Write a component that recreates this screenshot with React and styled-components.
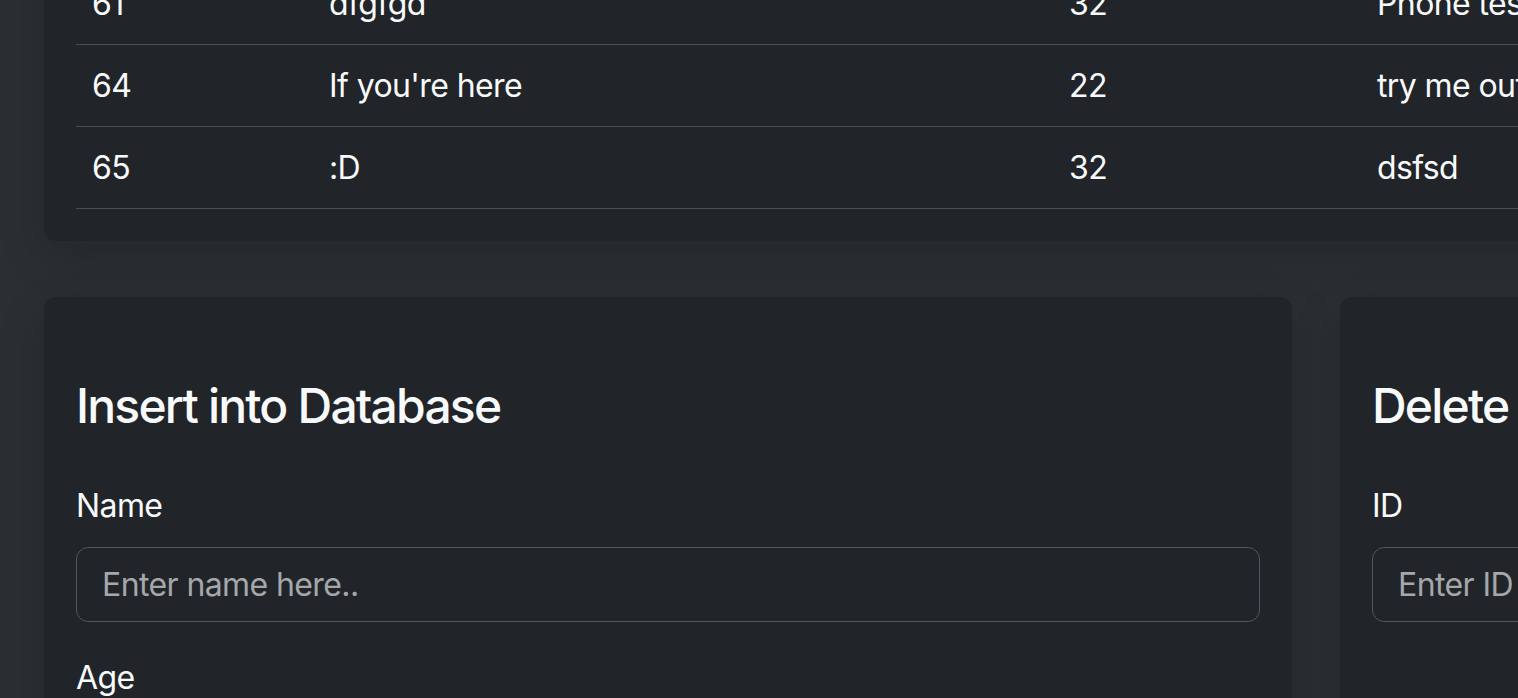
import React from 'react'
import styled, { createGlobalStyle } from 'styled-components'

const GlobalStyle = createGlobalStyle`
  html, body {
    margin: 0;
    padding: 0;
    background: #2b2f34;
    overflow: hidden;
  }
  body {
    font-family: Inter, 'Noto Sans', 'Liberation Sans', sans-serif;
    color: #f8f9fa;
    font-size: 32px;
    line-height: 48px;
    letter-spacing: -0.6px;
  }
  * {
    box-sizing: border-box;
  }
`

const rows = [
  { id: 61, name: 'dfgfgd', age: 32, text: 'Phone test' },
  { id: 64, name: "If you're here", age: 22, text: 'try me out' },
  { id: 65, name: ':D', age: 32, text: 'dsfsd' },
]

const Page = styled.div`
  width: 2544px;
  margin-left: 44px;
  display: flex;
  flex-direction: column;
  gap: 56px;
`

const Card = styled.section`
  background: #212529;
  border-radius: 12px;
  padding: ${(p) => (p.$form ? '80px 32px 32px' : '32px')};
  box-shadow: 0 16px 48px rgba(0, 0, 0, 0.16);
`

const TableCard = styled(Card)`
  margin-top: -69px;
`

const Table = styled.table`
  width: 2480px;
  table-layout: fixed;
  border-collapse: collapse;
  td {
    padding: 17px 16px 16px;
    line-height: 48px;
    border-bottom: 1px solid #494e54;
    white-space: nowrap;
    overflow: hidden;
  }
`

const Columns = styled.div`
  display: grid;
  grid-template-columns: 1248px 1248px;
  gap: 48px;
`

const Heading = styled.h4`
  margin: 0 0 47px;
  font-size: 48px;
  font-weight: 500;
  line-height: 1.2;
  letter-spacing: -1.8px;
  color: #f8f9fa;
`

const Field = styled.div`
  margin-bottom: 32px;
`

const Label = styled.label`
  display: block;
  margin-bottom: 17px;
  font-size: 32px;
  line-height: 48px;
`

const Input = styled.input`
  display: block;
  width: 100%;
  height: 75px;
  padding: 0 25px;
  font-family: inherit;
  font-size: 32px;
  letter-spacing: -0.6px;
  color: #f8f9fa;
  background: #212529;
  border: 1.5px solid #52575d;
  border-radius: 12px;
  outline: none;
  &::placeholder {
    color: #a5a7aa;
  }
`

function FormCard({ title, fields }) {
  return (
    <Card $form>
      <Heading>{title}</Heading>
      {fields.map((f) => (
        <Field key={f.label}>
          <Label>{f.label}</Label>
          <Input type='text' placeholder={f.placeholder} />
        </Field>
      ))}
    </Card>
  )
}

export default function App() {
  return (
    <>
      <GlobalStyle />
      <Page>
        <TableCard>
          <Table>
            <colgroup>
              <col style={{ width: 237 }} />
              <col style={{ width: 740 }} />
              <col style={{ width: 308 }} />
              <col />
            </colgroup>
            <tbody>
              {rows.map((r) => (
                <tr key={r.id}>
                  <td>{r.id}</td>
                  <td>{r.name}</td>
                  <td>{r.age}</td>
                  <td>{r.text}</td>
                </tr>
              ))}
            </tbody>
          </Table>
        </TableCard>
        <Columns>
          <FormCard
            title='Insert into Database'
            fields={[
              { label: 'Name', placeholder: 'Enter name here..' },
              { label: 'Age', placeholder: 'Enter age here..' },
            ]}
          />
          <FormCard
            title='Delete from Database'
            fields={[{ label: 'ID', placeholder: 'Enter ID here..' }]}
          />
        </Columns>
      </Page>
    </>
  )
}
